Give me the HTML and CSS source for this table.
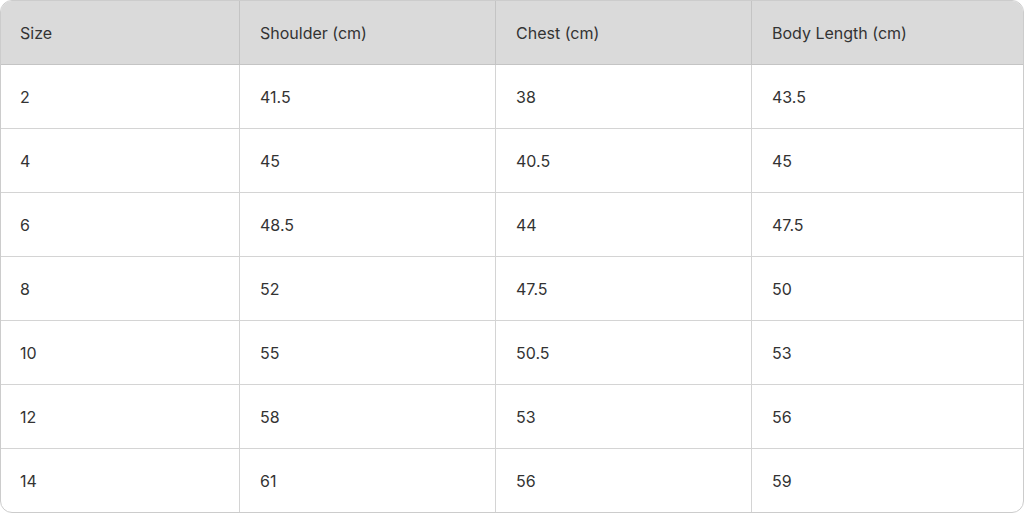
FILE: index.html
```html
<!DOCTYPE html>
<html>
<head>
<meta charset="utf-8">
<link rel="stylesheet" href="styles.css">
</head>
<body>
<div class="table">
  <div class="row head">
    <div class="cell">Size</div>
    <div class="cell">Shoulder (cm)</div>
    <div class="cell">Chest (cm)</div>
    <div class="cell">Body Length (cm)</div>
  </div>
  <div class="row"><div class="cell">2</div><div class="cell">41.5</div><div class="cell">38</div><div class="cell">43.5</div></div>
  <div class="row"><div class="cell">4</div><div class="cell">45</div><div class="cell">40.5</div><div class="cell">45</div></div>
  <div class="row"><div class="cell">6</div><div class="cell">48.5</div><div class="cell">44</div><div class="cell">47.5</div></div>
  <div class="row"><div class="cell">8</div><div class="cell">52</div><div class="cell">47.5</div><div class="cell">50</div></div>
  <div class="row"><div class="cell">10</div><div class="cell">55</div><div class="cell">50.5</div><div class="cell">53</div></div>
  <div class="row"><div class="cell">12</div><div class="cell">58</div><div class="cell">53</div><div class="cell">56</div></div>
  <div class="row"><div class="cell">14</div><div class="cell">61</div><div class="cell">56</div><div class="cell">59</div></div>
</div>
</body>
</html>
```
FILE: styles.css
```css
html, body {
  margin: 0;
  padding: 0;
  background: #ffffff;
}
body {
  font-family: Inter, "Noto Sans", sans-serif;
  font-size: 16px;
  color: #333333;
}
.table {
  width: 1024px;
  height: 513px;
  box-sizing: border-box;
  border: 1px solid #cccccc;
  border-radius: 12px;
  overflow: hidden;
}
.row {
  display: grid;
  grid-template-columns: 239px 256px 256px 271px;
  height: 64px;
  box-sizing: border-box;
  border-bottom: 1px solid #d4d4d4;
}
.row:last-child {
  border-bottom: none;
  height: 63px;
}
.head {
  background: #dadada;
  border-bottom-color: #c4c4c4;
}
.cell {
  display: flex;
  align-items: center;
  padding-left: 20px;
  border-right: 1px solid #d4d4d4;
}
.cell:first-child {
  padding-left: 19px;
}
.head .cell {
  border-right-color: #c4c4c4;
}
.cell:last-child {
  border-right: none;
}
```
